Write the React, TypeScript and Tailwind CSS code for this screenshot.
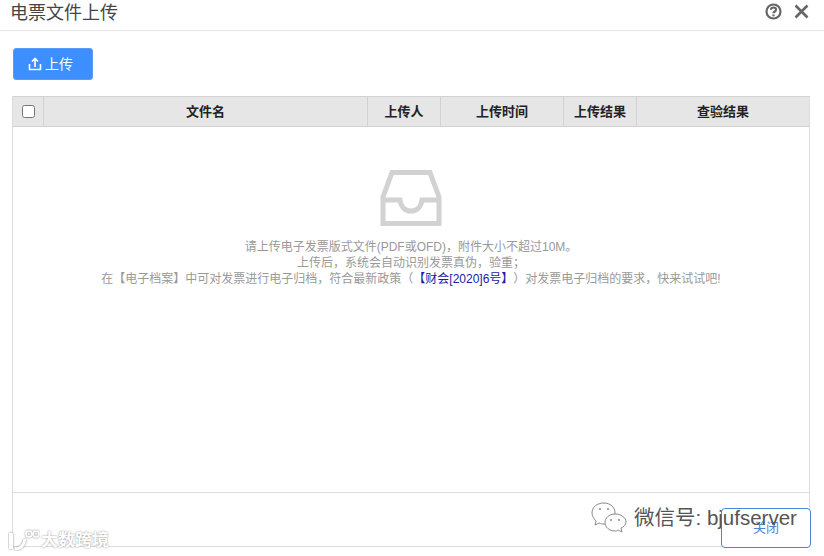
import React from 'react';

const font = { fontFamily: '"Liberation Sans", "Noto Sans CJK SC", sans-serif' };

const columns = [
  { label: '文件名', width: 'w-[324px]' },
  { label: '上传人', width: 'w-[73px]' },
  { label: '上传时间', width: 'w-[123px]' },
  { label: '上传结果', width: 'w-[73px]' },
  { label: '查验结果', width: 'flex-1' },
];

function InboxIcon() {
  return (
    <svg width="62" height="56" viewBox="0 0 62 56" fill="none" stroke="#d2d2d2" strokeWidth="5">
      <path d="M12 2.500h38L59 27v26.500H3V27z" />
      <path d="M3 30h17c1 7 5 11 11 11s10-4 11-11h17" />
    </svg>
  );
}

function WeChatIcon() {
  return (
    <svg width="36" height="32" viewBox="0 0 36 32" fill="#fff" stroke="#8a8a8a" strokeWidth="1">
      <path d="M13 1C6 1 1 5 1 11c0 3 2 6 4 8l-1 4 4-2c2 1 3 1 5 1 6 0 11-5 11-11S19 1 13 1z" />
      <path d="M24 12c-6 0-10 4-10 8.500S18 29 24 29c1 0 2 0 3-1l4 2-1-4c3-1 5-4 5-6 0-4.500-5-8-11-8z" />
      <circle cx="9" cy="7" r="1" fill="#8a8a8a" stroke="none" />
      <circle cx="17" cy="7" r="1" fill="#8a8a8a" stroke="none" />
      <circle cx="20" cy="18" r="1" fill="#8a8a8a" stroke="none" />
      <circle cx="28" cy="18" r="1" fill="#8a8a8a" stroke="none" />
    </svg>
  );
}

function WatermarkLogo() {
  return (
    <svg width="32" height="22" viewBox="0 0 32 22" fill="none" stroke="#fff" strokeWidth="2.500">
      <g style={{ filter: 'drop-shadow(0 0 1px #888)' }}>
        <path d="M3 4v16" strokeWidth="4" />
        <path d="M7 20c6 0 9-4 10-10" strokeWidth="3" />
        <circle cx="21" cy="5" r="3" strokeWidth="1.500" />
        <circle cx="28" cy="5" r="3" strokeWidth="1.500" />
      </g>
    </svg>
  );
}

export default function App() {
  return (
    <div className="relative w-[824px] h-[556px] bg-white overflow-hidden" style={font}>
      <div className="h-[31px] border-b border-[#e5e5e5] flex items-start justify-between pl-[10px] pr-[15px]">
        <span className="text-[18px] leading-[26px] text-[#444]">电票文件上传</span>
        <div className="flex items-center gap-[12px] pt-[3px]">
          <svg width="17" height="17" viewBox="0 0 17 17" fill="none" stroke="#666" strokeWidth="2.200">
            <circle cx="8.500" cy="8.500" r="7" />
            <path d="M6 6.800c0-1.500 1-2.300 2.500-2.300s2.500.9 2.500 2.200c0 1.800-2.500 1.800-2.500 3.600" />
            <path d="M8.500 11.500v1.800" />
          </svg>
          <svg width="15" height="15" viewBox="0 0 15 15" stroke="#666" strokeWidth="2.600" fill="none">
            <path d="M1.500 1.500l12 12M13.500 1.500l-12 12" />
          </svg>
        </div>
      </div>

      <div className="pt-[17px] pl-[13px]">
        <button className="w-[80px] h-[32px] rounded-[3px] bg-[#3d8eff] border border-[#5a9cf5] text-white text-[14px] flex items-center pl-[14px] gap-[3px]">
          <svg width="14" height="14" viewBox="0 0 14 14" fill="none" stroke="#fff" strokeWidth="1.600">
            <path d="M1.500 7v5.500h11V7" />
            <path d="M7 10V2M4 4.500L7 1.500l3 3" />
          </svg>
          上传
        </button>
      </div>

      <div className="mt-[16px] mx-[12px] w-[798px] h-[396px] border-x border-[#dcdcdc] flex flex-col">
        <div className="h-[31px] flex bg-[#e6e6e6] border-y border-[#d2d2d2] text-[13px] font-bold text-[#222]">
          <div className="w-[31px] flex items-center justify-center border-r border-[#d2d2d2]">
            <input type="checkbox" className="w-[13px] h-[13px]" />
          </div>
          {columns.map((col, i) => (
            <div
              key={col.label}
              className={`${col.width} flex items-center justify-center ${i < columns.length - 1 ? 'border-r border-[#d2d2d2]' : ''}`}
            >
              {col.label}
            </div>
          ))}
        </div>
        <div className="flex-1 flex flex-col items-center pt-[43px] text-[12px] leading-[16px] text-[#999] [text-spacing-trim:space-all]">
          <InboxIcon />
          <p className="mt-[13px]">请上传电子发票版式文件(PDF或OFD)，附件大小不超过10M。</p>
          <p>上传后，系统会自动识别发票真伪，验重；</p>
          <p>
            在【电子档案】中可对发票进行电子归档，符合最新政策（
            <span className="text-[#1a1aa6]">【财会[2020]6号】</span>
            ）对发票电子归档的要求，快来试试吧!
          </p>
        </div>
      </div>

      <div className="mx-[12px] w-[798px] h-[55px] border-y border-x border-[#dcdcdc] flex justify-end">
        <button className="mt-[15px] -mr-[2px] w-[90px] h-[40px] rounded-[4px] border border-[#4a86d8] bg-white text-[13px] text-[#4a86d8]">
          关闭
        </button>
      </div>

      <div className="absolute left-[591px] top-[502px] flex items-center gap-[7px]">
        <WeChatIcon />
        <span className="text-[20.500px] leading-[28px] text-[#555]">微信号: bjufserver</span>
      </div>
      <div className="absolute left-[8px] top-[527px] flex items-center gap-[1px] text-[17px] leading-[24px] font-bold text-white [text-shadow:0_0_2px_#888]">
        <WatermarkLogo />
        <span className="mt-[2px]">大数跨境</span>
      </div>
    </div>
  );
}
